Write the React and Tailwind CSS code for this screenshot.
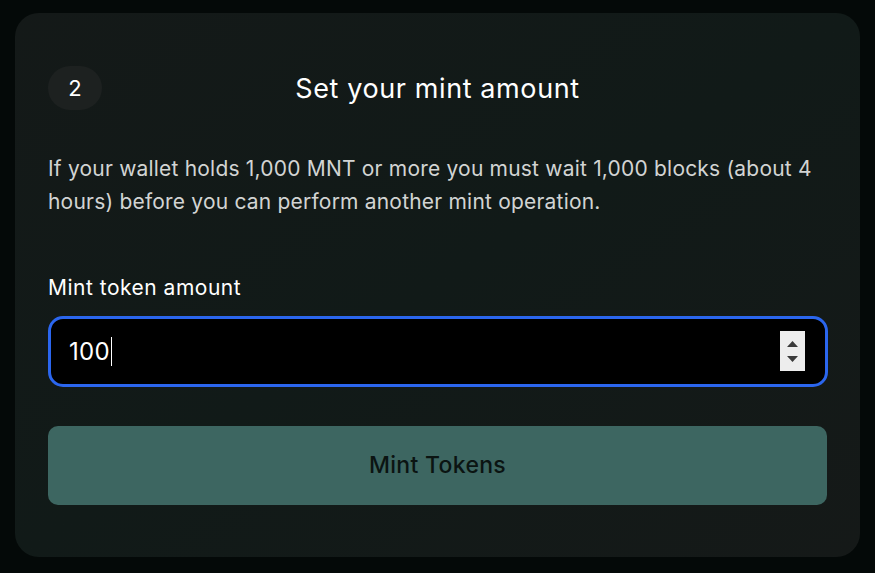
import React from "react";

const MintStep = () => {
    return (
        <div className="min-h-screen w-full bg-[#040908] px-[15px] pt-[13px] pb-[16px]" style={{ fontFamily: "Inter, 'Noto Sans', sans-serif" }}>
            <div className="w-[845px] h-[544px] rounded-[24px] bg-gradient-to-br from-[#141918] via-[#111a18] to-[#151918] px-[33px] pt-[53px]">
                <div className="flex items-center">
                    <div className="w-[54px] h-[44px] rounded-full bg-[#1d2120] flex items-center justify-center text-white text-[22px]">
                        2
                    </div>
                    <h2 className="flex-1 text-center text-white text-[27px] pr-[54px] pt-[3px] tracking-[0.6px]">
                        Set your mint amount
                    </h2>
                </div>

                <p className="mt-[42px] w-[808px] text-[#d2d4d3] text-[21px] leading-[33px] tracking-[0.2px]">
                    If your wallet holds 1,000 MNT or more you must wait 1,000 blocks (about 4 hours) before you can perform another mint operation.
                </p>

                <div className="mt-[54px] text-white text-[21px] tracking-[0.5px]">Mint token amount</div>

                <div className="mt-[12px] h-[71px] w-[780px] rounded-[15px] border-[3px] border-[#2b66ee] bg-black flex items-center pl-[18px] pr-[20px]">
                    <span className="text-white text-[24px] tracking-[0.3px] pt-[1px]">100</span>
                    <span className="w-px h-[29px] bg-white ml-[1px]" />
                    <div className="ml-auto w-[25px] h-[40px] bg-[#ededed] flex flex-col items-center justify-center gap-[9px]">
                        <svg width="11" height="6" viewBox="0 0 11 6"><path d="M5.5 0L11 6H0z" fill="#3a3a3a" /></svg>
                        <svg width="11" height="6" viewBox="0 0 11 6"><path d="M0 0h11L5.5 6z" fill="#3a3a3a" /></svg>
                    </div>
                </div>

                <button className="mt-[39px] h-[79px] w-[779px] rounded-[10px] bg-[#3d6661] text-[#0b1412] text-[23px] tracking-[0.3px] font-medium">
                    Mint Tokens
                </button>
            </div>
        </div>
    );
};

export default function App() {
    return <MintStep />;
}
